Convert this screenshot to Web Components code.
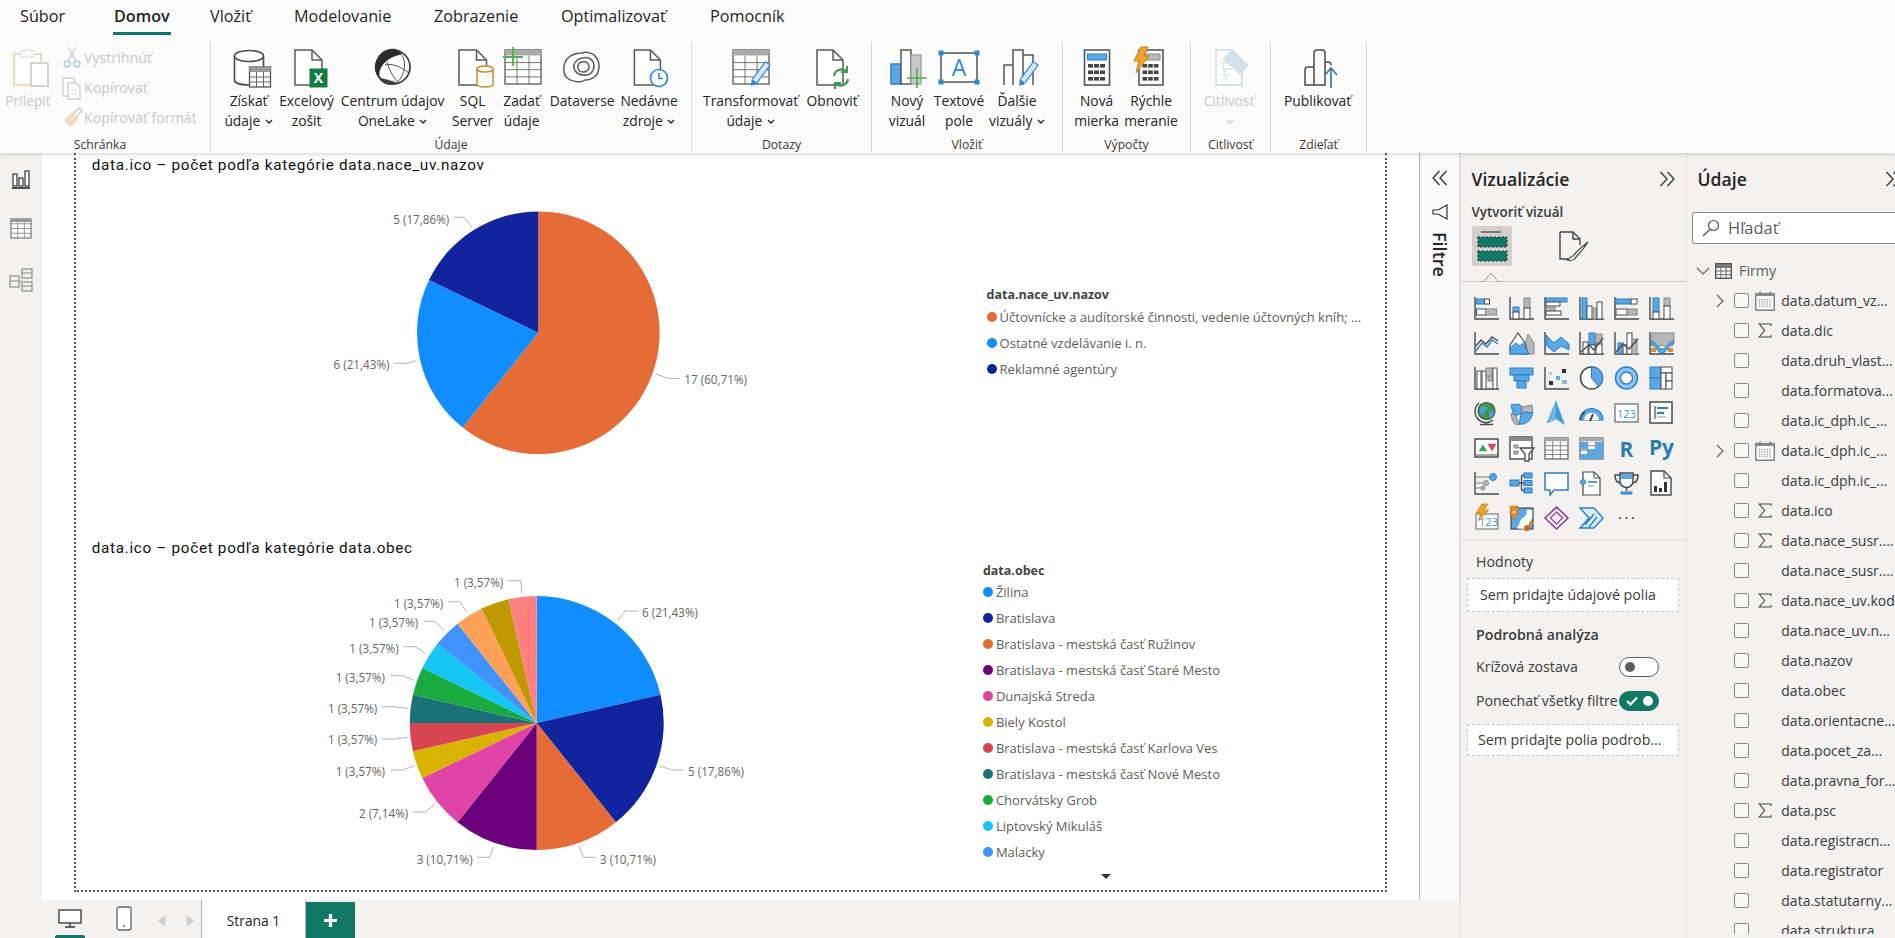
<!DOCTYPE html>
<html lang="sk"><head><meta charset="utf-8"><title>Power BI</title>
<style>
html,body{margin:0;height:100%;overflow:hidden;background:#fff}
body{font-family:"Open Sans","Noto Sans",sans-serif;color:#252423}
</style></head><body>
<pbi-app>
  <pbi-tabs slot="tabs"></pbi-tabs>
  <pbi-ribbon slot="ribbon">
    <rb-group w="211" label="Schránka" lp="10">
      <rb-btn w="56" icon="paste" disabled>Prilepiť</rb-btn>
      <rb-col>
        <rb-small icon="cut">Vystrihnúť</rb-small>
        <rb-small icon="copy">Kopírovať</rb-small>
        <rb-small icon="brush">Kopírovať formát</rb-small>
      </rb-col>
    </rb-group>
    <rb-group w="481" pl="5.6" label="Údaje">
      <rb-btn w="64" icon="getdata">Získať<br>údaje <pbi-caret></pbi-caret></rb-btn>
      <rb-btn w="52" icon="excel">Excelový<br>zošit</rb-btn>
      <rb-btn w="120" icon="onelake">Centrum údajov<br>OneLake <pbi-caret></pbi-caret></rb-btn>
      <rb-btn w="40" icon="sql">SQL<br>Server</rb-btn>
      <rb-btn w="58" icon="enter">Zadať<br>údaje</rb-btn>
      <rb-btn w="63" icon="dataverse">Dataverse</rb-btn>
      <rb-btn w="71" icon="recent">Nedávne<br>zdroje <pbi-caret></pbi-caret></rb-btn>
    </rb-group>
    <rb-group w="180" pl="8.6" label="Dotazy">
      <rb-btn w="100" icon="transform">Transformovať<br>údaje <pbi-caret></pbi-caret></rb-btn>
      <rb-btn w="63" icon="refresh">Obnoviť</rb-btn>
    </rb-group>
    <rb-group w="191" pl="8" label="Vložiť">
      <rb-btn w="54" icon="newviz">Nový<br>vizuál</rb-btn>
      <rb-btn w="50" icon="textbox">Textové<br>pole</rb-btn>
      <rb-btn w="66" icon="moreviz">Ďalšie<br>vizuály <pbi-caret></pbi-caret></rb-btn>
    </rb-group>
    <rb-group w="128" pl="6.6" label="Výpočty">
      <rb-btn w="54" icon="measure">Nová<br>mierka</rb-btn>
      <rb-btn w="55" icon="quick">Rýchle<br>meranie</rb-btn>
    </rb-group>
    <rb-group w="80" pl="5" label="Citlivosť">
      <rb-btn w="66" icon="sens" disabled>Citlivosť<br><pbi-caret></pbi-caret></rb-btn>
    </rb-group>
    <rb-group w="96" pl="6.6" label="Zdieľať">
      <rb-btn w="80" icon="publish">Publikovať</rb-btn>
    </rb-group>
  </pbi-ribbon>
  <pbi-rail slot="rail"></pbi-rail>
  <report-canvas slot="canvas">
    <chart-visual heading="data.ico – počet podľa kategórie data.nace_uv.nazov" chart="a" h="383">
      <chart-legend heading="data.nace_uv.nazov" top="109.3" left="6.6" items="#E66C37|Účtovnícke a audítorské činnosti, vedenie účtovných kníh; ...~#118DFF|Ostatné vzdelávanie i. n.~#12239E|Reklamné agentúry"></chart-legend>
    </chart-visual>
    <chart-visual heading="data.ico – počet podľa kategórie data.obec" chart="b" h="330">
      <chart-legend heading="data.obec" top="1.5" left="2.9" more items="#118DFF|Žilina~#12239E|Bratislava~#E66C37|Bratislava - mestská časť Ružinov~#6B007B|Bratislava - mestská časť Staré Mesto~#E044A7|Dunajská Streda~#D9B300|Biely Kostol~#D64550|Bratislava - mestská časť Karlova Ves~#197278|Bratislava - mestská časť Nové Mesto~#1AAB40|Chorvátsky Grob~#15C6F4|Liptovský Mikuláš~#4092FF|Malacky"></chart-legend>
    </chart-visual>
  </report-canvas>
  <filter-pane slot="filter"></filter-pane>
  <page-bar slot="pages"></page-bar>
  <viz-pane slot="viz"></viz-pane>
  <data-pane slot="data"></data-pane>
</pbi-app>
<script>
const D='#4a4a4a',B='#5ba7e6',BS='#2a7fc1',Gy='#b8b8b8',GS='#858585',W='#fff';
const R=(x,y,w,h,f=B,s=BS,sw=1,rx=0)=>`<rect x="${x}" y="${y}" width="${w}" height="${h}" rx="${rx}" fill="${f}" stroke="${s}" stroke-width="${sw}"/>`;
const P=(d,c=D,w=1.4,f='none')=>`<path d="${d}" fill="${f}" stroke="${c}" stroke-width="${w}"/>`;
const C=(x,y,r,f,s='none',w=1)=>`<circle cx="${x}" cy="${y}" r="${r}" fill="${f}" stroke="${s}" stroke-width="${w}"/>`;
const T=(x,y,t,c,sz,wt=400,fam='Open Sans')=>`<text x="${x}" y="${y}" fill="${c}" font-size="${sz}" font-weight="${wt}" font-family="${fam}" text-anchor="middle">${t}</text>`;
const svg=(w,h,inner,vb)=>`<svg xmlns="http://www.w3.org/2000/svg" width="${w}" height="${h}" viewBox="${vb||`0 0 ${w} ${h}`}" style="display:block;overflow:visible">${inner}</svg>`;
const doc=(x,y,w,h,c='#5a5a5a',f='#fff',fold=10)=>P(`M${x} ${y}h${w-fold}l${fold} ${fold}v${h-fold}h-${w}zM${x+w-fold} ${y}v${fold}h${fold}`,c,1.5,f);
const pen=(x1,y1,x2,y2)=>{const l=Math.hypot(x2-x1,y2-y1),ux=(x2-x1)/l,uy=(y2-y1)/l,bx=x2-ux*6,by=y2-uy*6,nx=-uy*3.5,ny=ux*3.5;
 return `<line x1="${x1}" y1="${y1}" x2="${bx}" y2="${by}" stroke="#2b88d8" stroke-width="7"/><line x1="${x1+ux*1}" y1="${y1+uy*1}" x2="${bx}" y2="${by}" stroke="#d5e9fb" stroke-width="4.600"/><path d="M${bx+nx} ${by+ny}L${x2} ${y2}L${bx-nx} ${by-ny}z" fill="#2b88d8"/>`};
const calc=(x,y,w,h,top,keys='#444')=>{let s=R(x,y,w,h,'#fff','#555',1.6)+R(x+3,y+4,w-6,6,top,top==='#5ba7e6'?BS:'#888',1);for(let r=0;r<3;r++)for(let c=0;c<3;c++)s+=`<rect x="${x+3.5+c*(w-7)/3}" y="${y+14+r*6.5}" width="${(w-10)/3}" height="3.6" fill="${keys}"/>`;return s};
const table=(x,y,w,h,hd=true,c='#666')=>{let s=R(x,y,w,h,'#fff',c,1.4);if(hd)s+=`<rect x="${x}" y="${y}" width="${w}" height="${h*.16}" fill="#aaa"/>`;const y0=y+(hd?h*.16:0),hh=(h-(hd?h*.16:0))/4;for(let i=1;i<4;i++)s+=`<path d="M${x} ${y0+i*hh}h${w}" stroke="${c}" stroke-width=".9"/>`;for(let i=1;i<3;i++)s+=`<path d="M${x+i*w/3} ${y0}V${y+h}" stroke="${c}" stroke-width=".9"/>`;return s};
const RI={
 paste:R(6,5,27,31,'#fff','#eed9b8',2.2)+P('M13 5V2h4a3 3 0 0 1 5 0h4v6H13z','#e0e0e0',1.3,'#fff')+R(23,14,17,23,'#fff','#cfcfcf',1.8),
 cut:P('M6 1l8 14M14 1L6 15','#cfcfcf',1.5)+C(5,18,3,'none','#a9cbe8',1.4)+C(15,18,3,'none','#a9cbe8',1.4),
 copy:R(1,2,11,18,'#fff','#cfcfcf',1.4)+P('M6 7h8l4 4v12H6z','#cfcfcf',1.4,'#fff')+P('M9 14h6M9 18h6','#d8d8d8',1),
 brush:P('M3 14l7-7 6 6-7 7c-3-2-5-3-6-6z','#f0ccaa',1,'#f7dcc0')+P('M11 8l6-6 3 3-6 6','#cfcfcf',1.6),
 getdata:P('M5.5 7v24c0 3 6 5 14.500 5s14.500-2 14.500-5V7','#4a4a4a',1.6,'#fff')+`<ellipse cx="20" cy="7" rx="14.500" ry="5.500" fill="#fff" stroke="#4a4a4a" stroke-width="1.600"/>`+R(20.5,18,21,20,'#fff','#555',1.3)+`<rect x="20.500" y="18" width="21" height="5" fill="#999"/>`+P('M20.500 28h21M20.500 33h21M27.500 23v15M34.500 23v15','#666',1),
 excel:doc(8,1,27,35)+R(23,20,17,18,'#107c41','#107c41',1)+T(31.5,34,'X','#fff',14,700),
 onelake:C(20,18,17,'#fff','#333',1.6)+P('M20 0a18 18 0 0 0-14 29C5 17 14 8 29 5c-3-3-6-5-9-5z','#2c2c2c',.5,'#2c2c2c')+P('M6 29C10 36 18 37 24 34c-6-2-11-4-18-5z','#3a3a3a',.5,'#3a3a3a')+P('M29 6c4 7 4 18-5 28M12 16c8-2 16 2 24 8M14 13c2 8 6 15 11 20','#555',1),
 sql:doc(6,1,27.5,35)+P('M24 20v15c0 2 3.500 3 8 3s8-1 8-3V20','#d48a2a',1.5,'#fff')+`<ellipse cx="32" cy="20" rx="8" ry="3" fill="#fff" stroke="#d48a2a" stroke-width="1.500"/>`,
 enter:table(3,1,36,34)+P('M11 -2v19M1 8h20','#4caf50',1.8),
 dataverse:P('M20 4c8-3 17 3 17 13 0 10-7 14-14 14-4 3-13 2-18-2C0 24 1 13 7 8c4-3 9-4 13-4z','#5a5a5a',1.5)+P('M21 9c7-2 11 3 11 8 0 6-5 10-10 9-7 0-11-5-10-10 1-4 5-7 9-7z','#5a5a5a',1.5)+P('M20 13c4-1 7 1 7 5 0 3-3 5-6 5-4 0-6-3-5-6 0-2 2-4 4-4z','#5a5a5a',1.5),
 recent:doc(5.4,1,26,35)+C(30,29,8.500,'#fff','#2b88d8',1.700)+P('M30 24v5.500h4','#2b88d8',1.5),
 transform:table(2,1,36,34)+pen(37,14,20,37),
 refresh:doc(5,1,26,35)+P('M22 27a7.500 7.500 0 0 1 12-5M36 30a7.500 7.500 0 0 1-12 5','#3d9a50',2.200)+P('M35 17v6h-6M23 40v-6h6','#3d9a50',2),
 newviz:R(4,15,10,20,B,BS,1.5)+R(14,1,10,34,'#fff','#555',1.5)+R(24,6,10,29,'#c8c8c8','#999',1.2)+P('M30 19v20M20 29h20','#4caf50',1.7),
 textbox:R(2,4,36,29,'#fff','#555',1.5)+[[2,4],[38,4],[2,33],[38,33]].map(([x,y])=>`<rect x="${x-2.500}" y="${y-2.500}" width="5" height="5" fill="#2b88d8"/>`).join('')+T(20,27,'A','#2b88d8',23),
 moreviz:P('M7 36V16h9v20M16 36V1h10v35M26 36V6h10v30','#555',1.5,'#fff')+pen(39,14,22,37),
 measure:calc(7.500,1,25,35,B),
 quick:calc(8,1,24,35,'#bbb')+P('M10 -2h7l-4 9h5L5 24l3-12H3z','#c87d12',1,'#f0a22a'),
 sens:doc(7,1,26,35,'#c9dde8','#fff')+P('M13 12l5 20','#c9dde8',1)+`<g transform="rotate(42 26 14)">${R(15,7,22,12,'#cfe2ec','#cfe2ec',1)}</g>`+P('M13 14h12M13 20h10M13 26h8','#dcebf2',2),
 publish:P('M7 36V21a3 3 0 0 1 3-3h6v18zM16 18V4a3 3 0 0 1 3-3h5a3 3 0 0 1 3 3v32H16zM27 13h3a3 3 0 0 1 3 3','#4a4a4a',1.5)+P('M33 39V20M27 26l6-7 6 7','#2b7cb5',1.7)
};
const cal=svg(20,20,R(.8,2.5,18.4,16.7,'#fff','#666',1.2)+`<rect x="1" y="2" width="18" height="3" fill="#8a8a8a"/>`+Array.from({length:20},(_,i)=>`<rect x="${4+(i%5)*2.6}" y="${8+Math.floor(i/5)*2.2}" width="1.200" height="1.200" fill="#888"/>`).join('')+P('M5 .5v3M15 .5v3','#666',1.2));
const sig=svg(14,15,P('M13 3V1H1.200l5.500 6.500-5.500 6.500H13v-2','#444',1.1));
const ax=P('M1 1v22h24');
const VZ=[
 ax+R(2.5,3,8,5)+R(10.5,3,5,5,W,D)+R(2.5,13,9,6,W,D)+R(11.5,13,11,6,Gy,GS),
 ax+R(4,11,6,5)+R(4,16,6,7,W,D)+R(15,2,6,10,Gy,GS)+R(15,12,6,11,W,D),
 ax+R(2,2,21,4)+R(2,6,14,4,W,D)+R(2,11,9,4,Gy,GS)+R(2,15,15,4,W,D),
 ax+R(3,2,5,21)+R(8,10,5,13,W,D)+R(14,12,4,11,Gy,GS)+R(18,6,5,17,W,D),
 ax+R(2,3,15,5)+R(17,3,6,5,W,D)+R(2,13,11,6,W,D)+R(13,13,10,6,Gy,GS),
 ax+R(4,2,6,14)+R(4,16,6,7,W,D)+R(15,2,6,8,Gy,GS)+R(15,10,6,13,W,D),
 ax+P('M2 15l5-6 5 4 6-7 6 4')+P('M2 20l6-8 5 4 5-7 6 4',BS),
 P('M13 23L19 3l6 9v11z',GS,1,Gy)+P('M1 14L9 2l7 10 3 11H1z',D,1.2,W)+P('M1 23v-6l6-5 4 3 3-3 6 11z',BS,1,B),
 ax+P('M2 4l8 8 7-6 8 7v6l-8-4-7 6-8-7z',BS,1,B),
 ax+R(4,11,5,12,W,D)+R(10,2,6,12)+R(10,14,6,9,W,D)+R(17,3,6,10,Gy,GS)+R(17,13,6,10,W,D)+P('M2 21l8-7 5 5 9-12'),
 ax+R(4,12,5,11)+R(9,14,4,9,W,D)+R(13,2,5,21,W,D)+R(18,8,5,15,Gy,GS)+P('M2 21l7-8 6 5 9-10'),
 ax+P('M2 2h23v10l-6 4-6-2-5 2-6-5z',GS,1,Gy)+P('M2 10c5 0 6 8 11 8s6-8 11-8v4c-5 0-6 8-11 8s-6-8-11-8z',BS,1,B)+`<rect x="2" y="17" width="5" height="4" fill="#e08a2a"/><rect x="19" y="17" width="5" height="4" fill="#e08a2a"/>`,
 ax+R(3,5,4,18,W,D)+R(8,5,4,18,W,D)+R(14,9,4,6,Gy,GS)+R(12,2,6,8,Gy,GS)+R(19,2,4,21,W,D),
 R(1,2,23,7)+R(5,9,15,6)+R(8,15,9,7),
 ax+`<rect x="5" y="6" width="3" height="3" fill="#9ec8ec"/><rect x="12" y="10" width="4" height="4" fill="#5ba7e6"/><rect x="18" y="3" width="4" height="4" fill="#333"/><rect x="5" y="15" width="4" height="4" fill="#333"/><rect x="18" y="14" width="5" height="4" fill="#8ab9e0"/>`,
 C(12.5,12,11,W,D,1.5)+P('M12.500 1a11 11 0 0 1 7 19.500l-7-8.500z',BS,1,B),
 C(12.5,12,11,'#8fc3ee',BS,1.4)+C(12.5,12,6,W,BS,1.4),
 R(1,1,11,11)+R(1,12,11,11)+R(12,1,11,6,W,D)+R(12,7,5,16,W,D)+R(17,7,6,8,W,D)+R(17,15,6,8,W,D),
 C(12.5,10,8.5,'#3a9a45',D,1.2)+P('M6 7c3-3 6-1 7 0 0 3-3 2-3 5s-3 2-4-1zM15 11c3-1 5 0 5 1-1 3-2 4-4 5z','#4c9fe0',.5,'#4c9fe0')+P('M5 2a11 11 0 0 0 14 17M12 21v2M6 23.500h13'),
 P('M2 4l8-1 3 3-1 6-5 3-3-3z',BS,1,B)+P('M13 6l10-2 1 8-7-1-4 2z',GS,1,Gy)+P('M2 12l5 3 3 9-4-1-3-5z',GS,1,Gy)+P('M12 13l5-2 7 1-3 7-6 4-5 0z',BS,1,B),
 P('M12 0l9 24-9-6-9 4z','#3f9fd9',.2,'#3f9fd9')+P('M12 0l-9 22 9-4z','#1f74b0',.2,'#70b7e6'),
 P('M1 19a11.500 11.500 0 0 1 23 0H1z',BS,1.2,B)+P('M6 19a6.500 6.500 0 0 1 13 0',W,1.6,W)+P('M1 19a11.500 11.500 0 0 1 5-8',D,1.6)+P('M11 20l3-7',D,2),
 R(1,3,23,18,W,GS,1.5)+T(12.5,16.5,'123','#3a8fd0',11),
 R(1,1,22,21,W,D,1.5)+P('M6 5v13',D,1.2)+P('M8 7h11M8 12h7',BS,2)+P('M8 16h9',Gy,1.5),
 R(1,3,23,18,W,D,1.5)+P('M5 15l4-6 4 6z','#3da35d',.5,'#3da35d')+P('M14 8h8l-4 7z','#d64550',.5,'#d64550')+P('M2 19h21',GS,1.5),
 R(1,1,22,22,W,D,1.4)+`<rect x="1" y="1" width="22" height="4" fill="#888"/>`+R(5,9,4,3,Gy,GS)+R(5,15,4,3,Gy,GS)+P('M11 12h14l-5 6v7h-4v-7z',D,1.3,W),
 table(1,2,23,21,true,'#777'),
 table(1,2,23,21,true,'#777')+`<rect x="1" y="6" width="7.500" height="7.500" fill="#5ba7e6"/><rect x="16.500" y="6" width="7.500" height="17" fill="#5ba7e6"/><rect x="1" y="18" width="15" height="5" fill="#5ba7e6"/><rect x="9" y="13" width="7" height="5" fill="#5ba7e6"/>`,
 T(12.5,21,'R','#2b7cb5',21,700),
 T(12.5,19,'Py','#2b7cb5',21,700),
 ax+P('M2 6h13M2 12h8M2 17h5','#777',1.1)+C(19,6,3.5,B,BS)+C(12,12,2.5,Gy,GS)+C(9,17,2,Gy,GS),
 R(1,9,9,6)+R(15,2,8,5)+R(15,9.5,8,5)+R(15,17,8,5)+P('M10 12h5M12.500 4.500v15M12.500 4.500H15M12.500 19.500H15',D,1.3),
 P('M1 2h23v17H10l-4 5v-5H1z',BS,1.5,W),
 P('M4 1h11l6 6v17H4z',D,1.2,W)+P('M15 1v6h6',D,1)+C(4,11,2.5,B,BS)+P('M9 11h9',BS,1.5)+P('M9 15h6',Gy,1.5),
 P('M6 2h13v8a6.500 6.500 0 0 1-13 0z',D,1.5,W)+`<rect x="7" y="3" width="11" height="5" fill="#5ba7e6"/>`+P('M6 4H1c0 5 2 8 6 8M19 4h5c0 5-2 8-6 8M12.500 16v4',D,1.5)+P('M7 23h11v-2H7z',BS,1,B),
 P('M2 0h13l7 7v17H2z',D,1.4,W)+P('M15 0v7h7',D,1.2)+`<rect x="5" y="15" width="3" height="6" fill="#333"/><rect x="10" y="17" width="3" height="4" fill="#333"/><rect x="15" y="11" width="3" height="10" fill="#333"/>`,
 R(2,8,22,15,W,GS,1.3)+T(14.5,20,'123','#3a8fd0',11)+P('M8 -2h6l-4 6h5L4 15l3-8H2z','#c87d12',.7,'#f0a22a'),
 R(2,2,22,21,B,D,1.2)+P('M8 22c4-4 2-8 6-10s4-5 4-8l5 0 0 8-6 11z',W,.5,W)+P('M1 0h8v7l-4 7-4-7z','#c66a1a',.5,'#e08a2a')+C(5,6,1.3,W)+C(22,17,2,'#e08a2a')+C(18,22,3,'#d4641a'),
 P('M12.500 1L24 12 12.500 23 1 12z','#8e3fa8',1.6)+P('M12.500 6l6 6-6 6-6-6z','#8e3fa8',1.2),
 P('M1 2h14l9 10-9 10H1l9-10zM6 19L15 8M10 21l8-10',BS,1.4,'#d9ecfa'),
 C(6,12,1,'#333')+C(12.5,12,1,'#333')+C(19,12,1,'#333')
];
function def(name,css,html,init){
 const t=document.createElement('template');t.innerHTML=`<style>${css}</style>${html}`;
 customElements.define(name,class extends HTMLElement{
  constructor(){super();this.attachShadow({mode:'open'}).appendChild(t.content.cloneNode(true))}
  connectedCallback(){if(init&&!this._i){this._i=1;init.call(this,this.shadowRoot)}}
 });
}
def('pbi-app',`:host{display:flex;flex-direction:column;width:1895px;height:938px;overflow:hidden;position:relative}
 .top{position:relative;z-index:2;background:#fbfbfb;box-shadow:0 2px 4px rgba(0,0,0,.13)}
 .main{flex:1;display:flex;min-height:0;background:#f3f2f1}
 .center{width:1460px;display:flex;flex-direction:column;flex:none}
 .row{flex:1;display:flex;min-height:0}
 .sidepanes{display:flex;flex:1;min-width:0}`,
 `<div class="top"><slot name="tabs"></slot><slot name="ribbon"></slot></div>
  <div class="main"><div class="center"><div class="row"><slot name="rail"></slot><slot name="canvas"></slot><slot name="filter"></slot></div><slot name="pages"></slot></div>
  <div class="sidepanes"><slot name="viz"></slot><slot name="data"></slot></div></div>`);
def('pbi-tabs',`:host{display:grid;grid-template-columns:94px 96px 84px 140px 127px 149px 100px;height:42px;padding-left:20px;font-size:16.200px;box-sizing:border-box;color:#252423}
 div{line-height:33px;height:42px;position:relative;white-space:nowrap}
 .on{font-weight:600}
 .on::after{content:"";position:absolute;left:-1px;width:58px;top:32px;height:3px;background:#117865}`,
 ['Súbor','Domov','Vložiť','Modelovanie','Zobrazenie','Optimalizovať','Pomocník'].map((t,i)=>`<div class="${i==1?'on':''}">${t}</div>`).join(''));
def('pbi-ribbon',`:host{display:flex;height:111px;box-sizing:border-box}`,`<slot></slot>`);
def('rb-group',`:host{display:flex;flex-direction:column;height:110px;box-sizing:border-box;border-right:1px solid #d6d5d3;flex:none}
 .b{flex:1;display:flex;min-height:0}
 .l{height:17px;line-height:20px;text-align:center;font-size:12.200px;color:#3b3a39}`,
 `<div class="b"><slot></slot></div><div class="l"></div>`,
 function(s){this.style.width=this.getAttribute('w')+'px';s.querySelector('.b').style.paddingLeft=(this.getAttribute('pl')||0)+'px';const l=s.querySelector('.l');l.textContent=this.getAttribute('label');if(this.getAttribute('lp'))l.style.paddingRight=this.getAttribute('lp')+'px'});
def('rb-btn',`:host{display:block;flex:none;font-size:13.800px;color:#252423;text-align:center;line-height:20px;white-space:nowrap;box-sizing:border-box}
 :host([disabled]){color:#c8c8c6}
 .i{height:38px;margin-top:7px;margin-bottom:4px;display:flex;justify-content:center}
 .t{margin:0 -12px}`,
 `<div class="i"></div><div class="t"><slot></slot></div>`,
 function(s){this.style.width=this.getAttribute('w')+'px';s.querySelector('.i').innerHTML=svg(40,38,RI[this.getAttribute('icon')])});
def('pbi-caret',`:host{display:inline-block;width:8px;height:6px;vertical-align:1px;margin-left:1px}`,svg(8,6,P('M1 1l3 3 3-3','currentColor',1.3)));
def('rb-col',`:host{display:flex;flex-direction:column;padding-left:4px}`,`<slot></slot>`);
def('rb-small',`:host{display:flex;align-items:center;height:30px;font-size:14.200px;color:#c8c8c6;white-space:nowrap}
 .i{width:24px;display:flex;justify-content:center;flex:none}`,`<div class="i"></div><slot></slot>`,
 function(s){s.querySelector('.i').innerHTML=svg(20,22,RI[this.getAttribute('icon')])});
def('pbi-rail',`:host{display:flex;flex-direction:column;align-items:center;width:42px;flex:none;background:#f3f2f1;padding-top:15.500px;box-sizing:border-box;gap:0}
 div{height:49.500px;display:flex;align-items:flex-start;justify-content:center;width:100%}`,
 `<div>${svg(20,20,P('M1 19h18','#222',1.6)+R(2,5,4,12,'#fff','#333',1.2)+R(8,9,4,8,'#fff','#333',1.2)+R(14,2,4,15,'#fff','#333',1.2))}</div>
  <div>${svg(22,21,table(1,1,20,19,false,'#8a8a8a')+`<rect x="1" y="1" width="20" height="3" fill="#999"/>`)}</div>
  <div>${svg(24,24,R(1,8,9,11,'#f3f2f1','#8a8a8a',1.2)+P('M1 13h9','#8a8a8a',1)+R(13,1,10,9,'#f3f2f1','#8a8a8a',1.2)+P('M13 5h10','#8a8a8a',1)+R(13,14,10,9,'#f3f2f1','#8a8a8a',1.2)+P('M13 18h10M10 13h3','#8a8a8a',1))}</div>`);
def('report-canvas',`:host{display:block;width:1377px;flex:none;background:#fff;padding:0 32px 8px;box-sizing:border-box;overflow:hidden}
 .frame{height:100%;box-sizing:border-box;border:2px dotted #555;border-top:none;display:flex;flex-direction:column}`,`<div class="frame"><slot></slot></div>`);
const pie=(cx,cy,r,vals,colors)=>{let a=-Math.PI/2,t=vals.reduce((x,y)=>x+y),o='';vals.forEach((v,i)=>{const b=a+v/t*2*Math.PI,l=b-a>Math.PI?1:0;o+=`<path d="M${cx} ${cy}L${(cx+r*Math.cos(a)).toFixed(2)} ${(cy+r*Math.sin(a)).toFixed(2)}A${r} ${r} 0 ${l} 1 ${(cx+r*Math.cos(b)).toFixed(2)} ${(cy+r*Math.sin(b)).toFixed(2)}Z" fill="${colors[i]}"/>`;a=b});return o};
const lab=(t,x,y,anchor,pts)=>`<polyline points="${pts}" fill="none" stroke="#b5b5b5" stroke-width="1"/><text x="${x}" y="${y}" text-anchor="${anchor}" dominant-baseline="central" font-size="11.700" fill="#666" font-family="Open Sans">${t}</text>`;
const z=(...a)=>{const o=[];for(let i=0;i<a.length;i+=2)o.push(((a[i]/3+300).toFixed(1))+','+((a[i+1]/3+540).toFixed(1)));return o.join(' ')};
const CH={
 a:{vb:[76,177,904,359],draw:pie(538.3,332.7,121.3,[17,6,5],['#E66C37','#118DFF','#12239E'])
   +lab('17 (60,71%)',684.3,379.3,'start','656,374 668,378.300 680,378.300')
   +lab('5 (17,86%)',449.3,218.7,'end','472.300,227.300 464,217.300 454,217.300')
   +lab('6 (21,43%)',389.5,363.8,'end','416.700,360.700 407,363.300 394,363.300')},
 b:{vb:[76,560,904,330],draw:pie(536.7,723,127,[6,5,3,3,2,1,1,1,1,1,1,1,1,1],['#118DFF','#12239E','#E66C37','#6B007B','#E044A7','#D9B300','#D64550','#197278','#1AAB40','#15C6F4','#4092FF','#FFA058','#BE9A00','#FF8080'])
   +lab('6 (21,43%)',642,612,'start',z(952,243,975,213,1015,213))
   +lab('5 (17,86%)',688,770.7,'start',z(1080,678,1115,690,1150,690))
   +lab('3 (10,71%)',600,858.7,'start',z(838,918,850,952,888,952))
   +lab('3 (10,71%)',472.7,858.7,'end',z(580,920,570,952,532,952))
   +lab('2 (7,14%)',408.3,812.7,'end',z(404,793,376,816,338,816))
   +lab('1 (3,57%)',385,770.7,'end',z(342,678,308,690,270,690))
   +lab('1 (3,57%)',377.3,739,'end',z(322,592,285,597,246,597))
   +lab('1 (3,57%)',377.3,707.7,'end',z(322,505,285,500,246,500))
   +lab('1 (3,57%)',385,676.7,'end',z(340,420,308,407,270,407))
   +lab('1 (3,57%)',398.7,647.7,'end',z(378,342,346,320,310,320))
   +lab('1 (3,57%)',418.3,622.3,'end',z(433,272,405,244,370,244))
   +lab('1 (3,57%)',443.3,602.7,'end',z(500,217,480,185,445,185))
   +lab('1 (3,57%)',503.3,581.7,'end',z(665,160,662,122,625,122))}
};
def('chart-visual',`:host{display:block;flex:none}
 h3{margin:0;height:24px;padding-left:15.700px;font:400 15.300px/24px Roboto,sans-serif;letter-spacing:.68px;color:#111;white-space:nowrap}
 .b{display:flex;align-items:flex-start}
 svg{flex:none}`,`<h3></h3><div class="b"><div class="c"></div><slot></slot></div>`,
 function(s){s.querySelector('h3').textContent=this.getAttribute('heading');this.style.height=this.getAttribute('h')+'px';const c=CH[this.getAttribute('chart')];s.querySelector('.c').innerHTML=svg(c.vb[2],c.vb[3],c.draw,c.vb.join(' '))});
def('chart-legend',`:host{display:block;color:#605e5c;font-size:13px;position:relative;white-space:nowrap}
 b{display:block;height:17.500px;line-height:17.500px;color:#444;font-size:12.500px;font-weight:700}
 .i{display:flex;align-items:center;height:26px}
 i{width:10px;height:10px;border-radius:50%;margin-right:3px;flex:none}
 .m{width:0;height:0;border:5.500px solid transparent;border-top:5.500px solid #333;border-bottom:0;margin:9px 0 0 118px}`,`<b></b><div class="l"></div>`,
 function(s){this.style.marginTop=this.getAttribute('top')+'px';this.style.marginLeft=this.getAttribute('left')+'px';s.querySelector('b').textContent=this.getAttribute('heading');
  s.querySelector('.l').innerHTML=this.getAttribute('items').split('~').map(x=>{const [c,...t]=x.split('|');return `<div class="i"><i style="background:${c}"></i><span>${t.join('|')}</span></div>`}).join('');
  if(this.hasAttribute('more'))s.querySelector('.l').insertAdjacentHTML('beforeend','<div class="m"></div>')});
def('filter-pane',`:host{display:flex;flex-direction:column;align-items:center;width:41px;flex:none;background:#fafafa;border-left:1px solid #b3b0ad;border-right:1px solid #e1dfdd;box-sizing:border-box;padding-top:17px}
 .t{writing-mode:vertical-rl;font-weight:600;font-size:18px;margin-top:12px;line-height:20px;color:#252423}`,
 `<div>${svg(16,16,P('M7.500 1L1 8l6.500 7M14.500 1L8 8l6.500 7','#333',1.3))}</div>
  <div style="margin-top:18px">${svg(16,16,P('M15 1v14L6 10H1V6h5z','#333',1.2))}</div><div class="t">Filtre</div>`);
def('page-bar',`:host{display:flex;height:38px;background:#f3f2f1;align-items:stretch;font-size:13.800px;flex:none}
 .dev{display:flex;justify-content:center;padding-top:9px;position:relative;box-sizing:border-box;margin-left:55px;width:30px}
 .ph{margin-left:23px;width:32px;display:flex;justify-content:center;padding-top:6px;box-sizing:border-box}
 .ar{width:61px;display:flex;padding:16px 0 0 18px;box-sizing:border-box;gap:20px}
 .tab{width:105px;box-sizing:border-box;background:#fff;border-left:1px solid #b3b0ad;border-right:1px solid #b3b0ad;text-align:center;line-height:41px;color:#252423}
 .plus{width:49px;margin-top:2px;background:#117865;display:flex;align-items:center;justify-content:center}
 .bar{position:absolute;bottom:0;left:0;width:30px;height:3px;background:#117865;border-radius:2px 2px 0 0}`,
 `<div class="dev">${svg(24,19,R(1,1,22,13,'#fff','#333',1.3)+P('M12 14v3M7 18h10','#333',1.4))}<div class="bar"></div></div>
  <div class="ph">${svg(16,25,R(1,1,14,23,'#fff','#666',1.3,2)+P('M7 20h2','#666',1.4))}</div>
  <div class="ar">${svg(8,10,P('M7 0v10L0 5z','#ccc',.5,'#ccc'))}${svg(8,10,P('M1 0v10l7-5z','#ccc',.5,'#ccc'))}</div>
  <div class="tab">Strana 1</div>
  <div class="plus">${svg(15,15,P('M7.500 1v13M1 7.500h13','#fff',3.2))}</div>`);
def('viz-pane',`:host{display:flex;flex-direction:column;width:226px;flex:none;background:#f3f2f1;border-left:1px solid #e1dfdd;box-sizing:border-box;position:relative;font-size:14.200px;color:#3b3a39}
 .h{display:flex;justify-content:space-between;align-items:center;height:28px;margin-top:12px;padding:0 11px 0 10.500px;font-size:17.600px;font-weight:600;color:#252423}
 .s{margin:9px 0 0 10.500px;line-height:20px;font-weight:600;font-size:13.400px;height:20px}
 .tool{display:flex;margin:4px 0 0 10.500px;height:40px}
 .sel{width:40px;height:40px;background:#d2d0ce;border-radius:2px;display:flex;align-items:center;justify-content:center}
 .fmt{margin:5px 0 0 46px}
 .hr{height:1px;background:#c8c6c4;margin-top:15px;position:relative}
 .hr svg{position:absolute;left:20px;top:-9px}
 .grid{display:grid;grid-template-columns:repeat(6,35px);grid-auto-rows:35px;margin:8px 0 0 8px;height:250px}
 .grid div{display:flex;align-items:center;justify-content:center}
 .hr2{height:1px;background:#e1dfdd;margin-top:0}
 .lbl{margin:10.500px 0 0 15px;line-height:20px;height:20px}
 well-box{margin:6px 0 0 6px}
 .b{margin:13px 0 0 15px;font-weight:600;height:20px;line-height:20px}
 .tr{display:flex;align-items:center;justify-content:space-between;height:20px;margin:12px 27px 0 15px;white-space:nowrap}
 .tr+.tr{margin-top:14px}
 `,
 `<div class="h"><span>Vizualizácie</span>${svg(16,16,P('M1.500 1L8 8l-6.500 7M8.500 1L15 8l-6.500 7','#333',1.3))}</div>
  <div class="s">Vytvoriť vizuál</div>
  <div class="tool"><div class="sel">${svg(32,32,P('M5 2h20','#444',1.2)+[0,1].map(k=>`<rect x="2" y="${7+k*14}" width="29" height="10" fill="#117865" stroke="#333" stroke-width="1.200" stroke-dasharray="2 2"/>`).join(''))}</div>
  <div class="fmt">${svg(32,30,P('M2 1h13l7 7v6M15 1v7h7M2 1v27h8','#444',1.4)+P('M30 11C25 15 18 21 15 25c-3 1-4 3-6 4 4 1 8 0 9-3 4-4 9-10 12-15z','#444',1.2))}</div></div>
  <div class="hr">${svg(20,10,P('M0 9.500h3L10 1l7 8.500h3','#a19f9d',1,'#f3f2f1'))}</div>
  <div class="grid">${VZ.map(x=>`<div>${svg(25,24,x)}</div>`).join('')}</div>
  <div class="hr2"></div>
  <div class="lbl">Hodnoty</div>
  <well-box style="height:34px">Sem pridajte údajové polia</well-box>
  <div class="b">Podrobná analýza</div>
  <div class="tr"><span>Krížová zostava</span><tog-gle></tog-gle></div>
  <div class="tr"><span>Ponechať všetky filtre</span><tog-gle on></tog-gle></div>
  <well-box style="height:32px;margin-top:13px" tight>Sem pridajte polia podrob...</well-box>`);
def('well-box',`:host{display:flex;align-items:center;width:212px;background:#fff;border:1px dashed #c8c6c4;box-sizing:border-box;padding-left:12px;font-size:14.200px;color:#3b3a39;white-space:nowrap;flex:none}
 :host([tight]){padding-left:10px}`,`<slot></slot>`);
def('tog-gle',`:host{display:flex;align-items:center;justify-content:flex-start;width:40px;height:20px;border-radius:10px;border:1px solid #605e5c;background:#fff;box-sizing:border-box;padding:0 5px;flex:none}
 i{width:10px;height:10px;border-radius:50%;background:#605e5c}
 :host([on]){background:#117865;border-color:#117865;justify-content:space-between;padding:0 5px 0 6px}
 :host([on]) i{background:#fff}`,`<span></span><i></i>`,
 function(s){const sp=s.querySelector('span');if(this.hasAttribute('on'))sp.innerHTML=svg(12,10,P('M1 5l3.500 3.500L11 1.500','#fff',2.2));else sp.remove()});
def('data-row',`:host{display:flex;align-items:center;height:30px;flex:none;white-space:nowrap;font-size:14px;color:#3b3a39}
 .x{width:47px;display:flex;justify-content:flex-end;padding-right:10px;box-sizing:border-box;flex:none}
 .cb{width:15px;height:15px;border:1px solid #8a8886;border-radius:2px;box-sizing:border-box;flex:none;background:#f8f8f7}
 .ic{width:32.300px;display:flex;justify-content:center;flex:none}`,
 `<div class="x"></div><div class="cb"></div><div class="ic"></div><slot></slot>`,
 function(s){if(this.hasAttribute('exp'))s.querySelector('.x').innerHTML=svg(8,14,P('M1 1l6 6-6 6','#605e5c',1.1));const k=this.getAttribute('kind');if(k)s.querySelector('.ic').innerHTML=k=='cal'?cal:sig});
def('data-pane',`:host{display:flex;flex-direction:column;flex:1;min-width:0;background:#f3f2f1;border-left:1px solid #e1dfdd;box-sizing:border-box;overflow:hidden;padding-bottom:4px}
 .h{display:flex;justify-content:space-between;align-items:center;height:28px;margin-top:12px;padding:0 0 0 10.500px;font-size:17.600px;font-weight:600;color:#252423;white-space:nowrap}
 .h svg{margin-right:-6px}
 .q{display:flex;align-items:center;margin:18.500px 0 0 5px;width:230px;height:32px;background:#fff;border:1px solid #8a8886;border-radius:2px;box-sizing:border-box;font-size:16.500px;color:#605e5c;padding-left:9px;flex:none;gap:8px}
 .f{display:flex;align-items:center;height:30px;margin-top:12px;flex:none;font-size:14.300px;color:#605e5c}
 .list{flex:1;min-height:0;overflow:hidden}`,
 `<div class="h"><span>Údaje</span>${svg(16,16,P('M1.500 1L8 8l-6.500 7M8.500 1L15 8l-6.500 7','#333',1.3))}</div>
  <div class="q">${svg(18,18,C(11.500,6.500,5,'none','#555',1.2)+P('M8 10.500L1 17','#555',1.3))}<span>Hľadať</span></div>
  <div class="f"><span style="margin-left:9px;width:19px;display:block">${svg(14,8,P('M1 1l6 6 6-6','#605e5c',1.1))}</span>${svg(17,16,table(.7,.7,15.600,14.600,false,'#555')+`<rect x="1" y="1" width="15" height="3" fill="#777"/>`)}<span style="margin-left:7px">Firmy</span></div>
  <div class="list"><slot></slot></div>`,
 function(){const rows=[['data.datum_vz...','cal',1],['data.dic','sig'],['data.druh_vlast...'],['data.formatova...'],['data.ic_dph.ic_...'],['data.ic_dph.ic_...','cal',1],['data.ic_dph.ic_...'],['data.ico','sig'],['data.nace_susr....','sig'],['data.nace_susr....'],['data.nace_uv.kod','sig'],['data.nace_uv.n...'],['data.nazov'],['data.obec'],['data.orientacne...'],['data.pocet_za...'],['data.pravna_for...'],['data.psc','sig'],['data.registracn...'],['data.registrator'],['data.statutarny...'],['data.struktura']];
  rows.forEach(([t,k,e])=>{const r=document.createElement('data-row');if(k)r.setAttribute('kind',k);if(e)r.setAttribute('exp','');r.textContent=t;this.appendChild(r)})});
</script>
</body></html>
